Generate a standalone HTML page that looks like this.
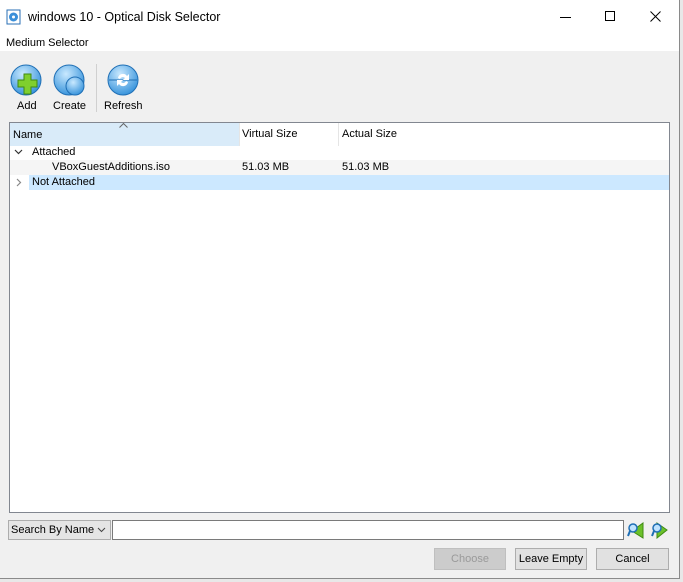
<!DOCTYPE html>
<html><head><meta charset="utf-8"><style>
*{margin:0;padding:0;box-sizing:border-box}
body{width:683px;height:582px;background:#e8e8e8;font-family:"Liberation Sans",sans-serif;font-size:11px;color:#000;position:relative;overflow:hidden}
.win{position:absolute;left:0;top:0;width:680px;height:579px;background:#f0f0f0;border:1px solid #8a8a8a;border-top:none;border-left:none}
.top{position:absolute;left:0;top:0;width:679px;height:51px;background:#fff}
.abs{position:absolute;white-space:nowrap}
.tbl{position:absolute;left:9px;top:122px;width:661px;height:391px;background:#fff;border:1px solid #828790}
.btn{position:absolute;top:548px;height:22px;border:1px solid #adadad;background:#e1e1e1;text-align:center;line-height:20px;font-size:11px}
</style></head><body>
<div class="win">
<div class="top"></div>
<svg class="abs" style="left:6px;top:9px" width="16" height="16" viewBox="0 0 16 16"><rect x="1" y="1" width="13" height="14" fill="#fff" stroke="#2a6fb5"/><circle cx="7.5" cy="8" r="4.5" fill="#3b8fd9"/><circle cx="7.5" cy="8" r="1.5" fill="#fff"/></svg>
<div class="abs" style="left:28px;top:10px;font-size:12.5px">windows 10 - Optical Disk Selector</div>
<div class="abs" style="left:560px;top:17px;width:11px;height:1px;background:#000"></div>
<div class="abs" style="left:605px;top:11px;width:10px;height:10px;border:1px solid #000"></div>
<svg class="abs" style="left:650px;top:11px" width="11" height="11"><path d="M0.5 0.5L10.5 10.5M10.5 0.5L0.5 10.5" stroke="#000" stroke-width="1"/></svg>
<div class="abs" style="left:6px;top:37px">Medium Selector</div>

<svg class="abs" style="left:10px;top:64px" width="34" height="34" viewBox="0 0 34 34"><defs><radialGradient id="g" cx="40%" cy="30%" r="70%"><stop offset="0" stop-color="#c9e9ff"/><stop offset="1" stop-color="#3a95dc"/></radialGradient></defs><circle cx="16" cy="16" r="15" fill="url(#g)" stroke="#1f6fb5"/><path d="M14 10h7v6h6v7h-6v7h-7v-7h-6v-7h6z" fill="#7fcf2e" stroke="#3f8a12"/></svg>
<div class="abs" style="left:17px;top:100px">Add</div>
<svg class="abs" style="left:53px;top:64px" width="34" height="34" viewBox="0 0 34 34"><circle cx="16" cy="16" r="15" fill="url(#g)" stroke="#1f6fb5"/><circle cx="22" cy="22" r="9" fill="url(#g)" stroke="#1f6fb5"/></svg>
<div class="abs" style="left:53px;top:100px">Create</div>
<div class="abs" style="left:96px;top:64px;width:1px;height:48px;background:#d0d0d0"></div>
<svg class="abs" style="left:106px;top:64px" width="34" height="34" viewBox="0 0 34 34"><circle cx="17" cy="16" r="15" fill="url(#g)" stroke="#1f6fb5"/><path d="M3 16h28" stroke="#1f6fb5"/><path d="M12 14a5 5 0 0 1 9-2l2-2v6h-6l2-2a3 3 0 0 0-5 1zM22 18a5 5 0 0 1-9 2l-2 2v-6h6l-2 2a3 3 0 0 0 5-1z" fill="#fff"/></svg>
<div class="abs" style="left:104px;top:100px">Refresh</div>

<div class="tbl">
<div class="abs" style="left:0;top:0;width:229px;height:23px;background:#d9ebf9"></div>
<div class="abs" style="left:229px;top:0;width:1px;height:23px;background:#e5e5e5"></div>
<div class="abs" style="left:328px;top:0;width:1px;height:23px;background:#e5e5e5"></div>
<svg class="abs" style="left:109px;top:0px" width="9" height="5"><path d="M0.5 4.5L4.5 0.5L8.5 4.5" fill="none" stroke="#666"/></svg>
<div class="abs" style="left:3px;top:6px">Name</div>
<div class="abs" style="left:232px;top:5px">Virtual Size</div>
<div class="abs" style="left:332px;top:5px">Actual Size</div>
<svg class="abs" style="left:4px;top:26px" width="9" height="6"><path d="M1 1l3.5 3.5L8 1" fill="none" stroke="#333" stroke-width="1.2"/></svg>
<div class="abs" style="left:22px;top:23px">Attached</div>
<div class="abs" style="left:0;top:37px;width:659px;height:15px;background:#f5f5f5"></div>
<div class="abs" style="left:42px;top:38px">VBoxGuestAdditions.iso</div>
<div class="abs" style="left:232px;top:38px">51.03 MB</div>
<div class="abs" style="left:332px;top:38px">51.03 MB</div>
<div class="abs" style="left:19px;top:52px;width:640px;height:15px;background:#cce8ff"></div>
<svg class="abs" style="left:6px;top:55px" width="6" height="9"><path d="M1 1l3.5 3.5L1 8" fill="none" stroke="#888" stroke-width="1.2"/></svg>
<div class="abs" style="left:22px;top:53px">Not Attached</div>
</div>

<div class="abs" style="left:8px;top:520px;width:103px;height:20px;background:#e5e5e5;border:1px solid #adadad"></div>
<div class="abs" style="left:11px;top:524px">Search By Name</div>
<svg class="abs" style="left:97px;top:527px" width="9" height="6"><path d="M1 1l3.5 3.5L8 1" fill="none" stroke="#444"/></svg>
<div class="abs" style="left:112px;top:520px;width:512px;height:20px;background:#fff;border:1px solid #7a7a7a"></div>
<svg class="abs" style="left:627px;top:520px" width="18" height="20"><path d="M5 11l11-8v15z" fill="#6cc02a" stroke="#3e8a12"/><circle cx="6" cy="8" r="4" fill="#bfe3ff" stroke="#1f6fb5" stroke-width="1.5"/><path d="M3 11l-2 5" stroke="#1f6fb5" stroke-width="2"/></svg>
<svg class="abs" style="left:650px;top:520px" width="18" height="20"><path d="M7 3l10 7-10 8z" fill="#6cc02a" stroke="#3e8a12"/><circle cx="7" cy="8" r="4" fill="#bfe3ff" stroke="#1f6fb5" stroke-width="1.5"/><path d="M4 11l-2 5" stroke="#1f6fb5" stroke-width="2"/></svg>

<div class="btn" style="left:434px;width:72px;color:#9a9a9a;border-color:#bfbfbf;background:#ccc">Choose</div>
<div class="btn" style="left:515px;width:72px">Leave Empty</div>
<div class="btn" style="left:596px;width:73px">Cancel</div>
</div>
</body></html>
